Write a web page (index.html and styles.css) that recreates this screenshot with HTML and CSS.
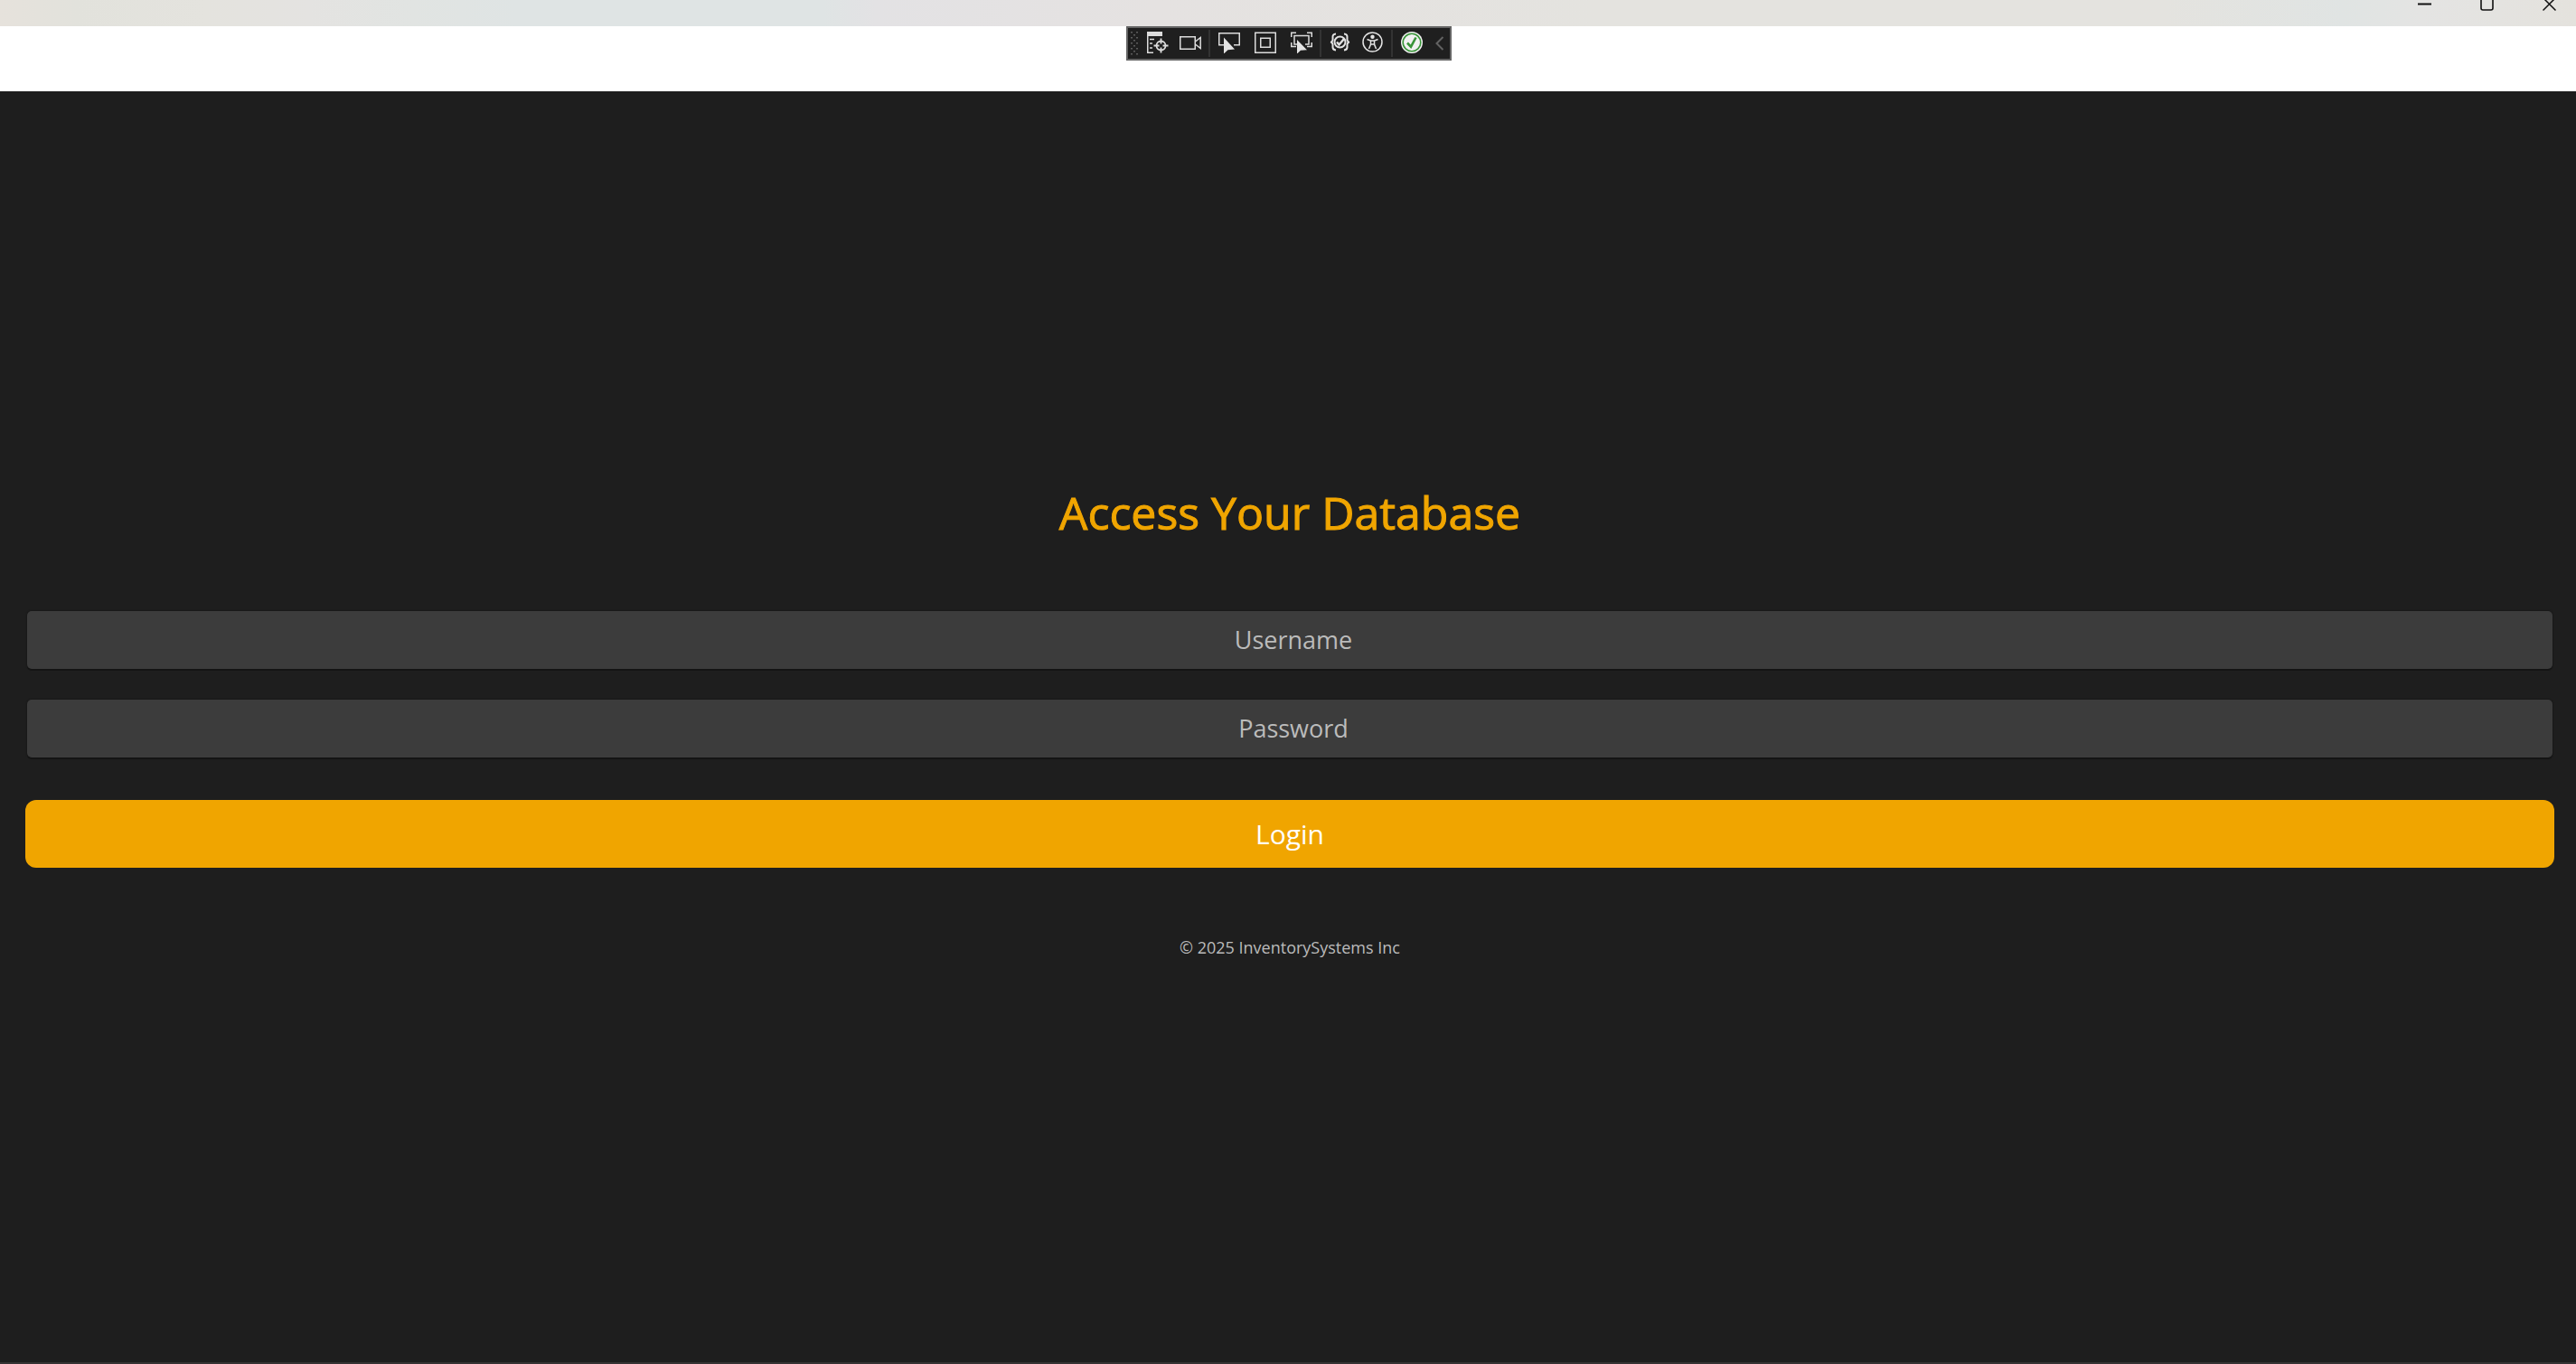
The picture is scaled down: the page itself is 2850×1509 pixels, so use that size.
FILE: index.html
```html
<!DOCTYPE html>
<html lang="en">
<head>
<meta charset="utf-8">
<title>Inventory Login</title>
<link rel="stylesheet" href="styles.css">
</head>
<body>
<header class="titlebar">
  <button class="caption" aria-label="Minimize"><svg width="16" height="18"><path d="M0 9.5h15" stroke="#111" stroke-width="2"/></svg></button>
  <button class="caption" aria-label="Maximize"><svg width="16" height="18"><rect x="1" y="2" width="13" height="14" rx="2" fill="none" stroke="#111" stroke-width="1.6"/></svg></button>
  <button class="caption" aria-label="Close"><svg width="16" height="18"><path d="M.5 2.500l14 14M14.500 2.500l-14 14" stroke="#111" stroke-width="1.500"/></svg></button>
</header>
<div class="strip">
  <div class="toolbar" role="toolbar" aria-label="Debug tools">
    <svg class="grip" width="10" height="28" fill="#5c5c5c"><defs><pattern id="dots" width="6" height="6" patternUnits="userSpaceOnUse"><path d="M0 1h2v1.500H0zM3 4h2v1.500H3z"/></pattern></defs><rect width="8" height="28" fill="url(#dots)"/></svg>
    <div class="group">
      <button class="tool" aria-label="Live visual tree"><svg width="24" height="24" fill="none" stroke="#dcdcdc" stroke-width="1.500"><path d="M0 0h17v5H0z" fill="#dcdcdc" stroke="none"/><path d="M.75 4v19.250H7M3 8.500h5M3 13h3M3 18h3"/><circle cx="15.500" cy="15.500" r="5" stroke-width="1.800"/><path d="M15.500 7.500v6M15.500 17.500v6M7.500 15.500h6M17.500 15.500h6" stroke-width="1.800"/></svg></button>
      <button class="tool" aria-label="Record"><svg width="24" height="24" fill="none" stroke="#dcdcdc" stroke-width="1.500"><path d="M.75 5.750h16.500v13.500H.75zM17.500 11l5.700-4.500v12L17.500 14"/></svg></button>
    </div>
    <div class="group wide">
      <button class="tool" aria-label="Select element"><svg width="24" height="24"><path d="M6 14.700H.75V1.750h22.500V14.700H17" fill="none" stroke="#dcdcdc" stroke-width="1.500"/><path d="M6 6.500v18l4.500-4.300 7.500-.7z" fill="#e4e4e4"/></svg></button>
      <button class="tool" aria-label="Layout adorners"><svg width="24" height="24" fill="none" stroke="#dcdcdc" stroke-width="1.500"><path d="M.75 1.250h22.500v22H.75zM6.750 7.250h10.500v10H6.750z"/></svg></button>
      <button class="tool" aria-label="Track focus"><svg width="24" height="24"><path d="M.75 6V1.250H6M18 1.250h5.250V6M.75 12v4.500H6M23.250 12v4.500H18M8 14H4V4.500h16V14h-4" fill="none" stroke="#dcdcdc" stroke-width="1.500"/><path d="M7 9v15.500l4-3.700 7-.6z" fill="#e4e4e4"/></svg></button>
    </div>
    <div class="group">
      <button class="tool" aria-label="Binding failures"><svg width="24" height="24" fill="none" stroke="#e4e4e4" stroke-width="2"><path d="M7 2.500Q3 2.500 3.500 7T1 11.500Q4 12 3.500 16T7 20.500M16 2.500q4 0 3.500 4.500T22 11.500q-3 .5-2.500 4.500T16 20.500"/><circle cx="11.500" cy="11.500" r="6"/><path d="M8 11.500l2.500 3L16 8" stroke-width="2.400"/></svg></button>
      <button class="tool" aria-label="Accessibility checker"><svg width="24" height="24" fill="none" stroke="#e4e4e4" stroke-width="1.500"><circle cx="11.500" cy="11.500" r="10.500"/><circle cx="11.500" cy="5.800" r="2.200" fill="#e4e4e4" stroke="none"/><path d="M5.500 8.500l4 1.500v4l-2 5M17.500 8.500l-4 1.500v4l2 5M9.500 10h4M9.500 14h4"/></svg></button>
    </div>
    <div class="group">
      <button class="tool" aria-label="Hot reload available"><svg width="24" height="24"><circle cx="12" cy="12" r="12" fill="#f1f1f1"/><circle cx="12" cy="12" r="9.800" fill="none" stroke="#389438" stroke-width="1.600"/><path d="M7 12.500l4 4.200L16.500 6.500" fill="none" stroke="#389438" stroke-width="2.600"/></svg></button>
    </div>
    <button class="collapse" aria-label="Collapse toolbar"><svg width="10" height="16"><path d="M8.500 1L1.500 8l7 7" fill="none" stroke="#626262" stroke-width="2"/></svg></button>
  </div>
</div>
<main class="page">
  <form class="login">
    <h1 class="title">Access Your Database</h1>
    <div class="fields">
      <input class="field" type="text" placeholder="Username" aria-label="Username">
      <input class="field" type="password" placeholder="Password" aria-label="Password">
    </div>
    <button class="submit" type="button">Login</button>
    <p class="copyright">© 2025 InventorySystems Inc</p>
  </form>
</main>
</body>
</html>
```
FILE: styles.css
```css
* {
  box-sizing: border-box;
}

body {
  margin: 0;
  min-height: 100vh;
  display: flex;
  flex-direction: column;
  background: #fff;
  font-family: "Open Sans", sans-serif;
}

button {
  border: 0;
  padding: 0;
  background: none;
  font: inherit;
}

svg {
  display: block;
}

.titlebar {
  height: 29px;
  display: flex;
  justify-content: flex-end;
  gap: 53px;
  padding-right: 21px;
  overflow: hidden;
  background: linear-gradient(90deg, #e6e2dc 0%, #e2e2dc 3%, #e4e3de 8%, #e4e3e1 12%, #e1e4e2 16%, #dfe4e4 20%, #dfe4e4 32%, #e3e2e4 34%, #e5e2e1 45%, #e4e3df 62%, #e4e3df 84%, #e0e4e3 91%, #e4e4e3 94%, #e4e2dd 100%);
}

.caption {
  width: 16px;
  height: 18px;
  margin-top: -5px;
}

.strip {
  height: 72px;
  display: flex;
  justify-content: center;
  align-items: flex-start;
  padding-left: 2px;
}

.toolbar {
  height: 38px;
  display: flex;
  align-items: center;
  padding: 0 6px 0 3px;
  border: 2px solid #646464;
  background: #1f1f1f;
}

.group {
  height: 30px;
  display: flex;
  align-items: center;
  gap: 12px;
  padding: 0 8px;
}

.group + .group {
  padding-left: 9px;
  border-left: 2px solid #333;
}

.wide {
  gap: 16px;
}

.tool {
  width: 24px;
  height: 24px;
  margin-bottom: 2px;
}

.collapse {
  margin-left: 6px;
}

.page {
  flex: 1;
  display: flex;
  align-items: center;
  padding: 0 24px 14px 28px;
  border-bottom: 2px solid #353334;
  background: #1e1e1e;
}

.login {
  flex: 1;
  display: flex;
  flex-direction: column;
  text-align: center;
}

.title {
  margin: 0 0 76px;
  color: #f0a500;
  font-size: 50px;
  font-weight: 400;
  -webkit-text-stroke: 1px #f0a500;
  line-height: 66px;
}

.fields {
  display: flex;
  flex-direction: column;
  gap: 34px;
  margin: 0 2px 47px;
}

.field {
  width: 100%;
  height: 64px;
  padding: 0 8px 2px 16px;
  border: 0;
  border-radius: 5px;
  background: #3c3c3c;
  box-shadow: 0 2px 0 #141414, 0 0 1px 1px #191919;
  color: #fff;
  font-family: inherit;
  font-size: 27px;
  text-align: center;
}

.field::placeholder {
  color: #bbb;
  opacity: 1;
}

.submit {
  height: 75px;
  border-radius: 12px;
  background: #f0a500;
  color: #fff;
  font-size: 30px;
}

.copyright {
  margin: 76px 0 0;
  color: #bbb;
  font-size: 18px;
  line-height: 24px;
}
```
